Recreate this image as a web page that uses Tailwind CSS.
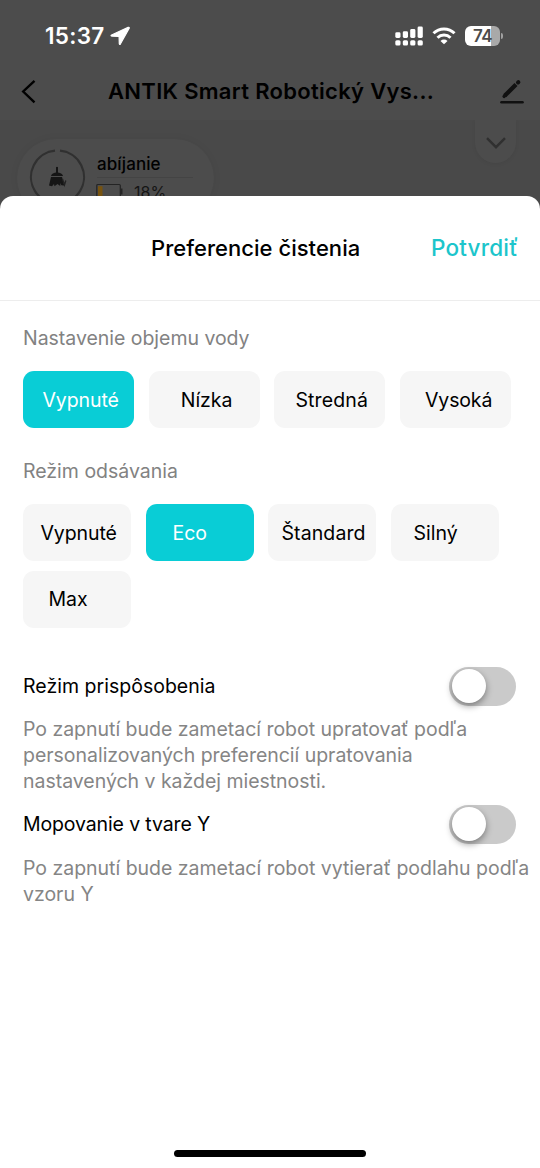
<!DOCTYPE html>
<html lang="sk">
<head>
<meta charset="utf-8">
<title>Preferencie čistenia</title>
<script src="https://cdn.jsdelivr.net/npm/@tailwindcss/browser@4"></script>
</head>
<body class="flex h-[1168px] w-[540px] flex-col overflow-hidden bg-[#494949] font-['Inter','Liberation_Sans',sans-serif] text-black">
  <header class="flex h-[120px] flex-none flex-col bg-[#4c4c4c]">
    <div class="flex h-[72px] items-center pl-[45px] pr-[37px] text-white">
      <span class="w-[65px] whitespace-nowrap text-[22.500px] font-semibold tracking-[0.3px]">15:37</span>
      <svg class="h-[20px] w-[20px]" viewBox="0 0 20 20"><path d="M18.2 1.300 1.600 9q-1.300.8.2 1.100l7.300.3.2 7.200q.3 1.500 1.200.2L19.200 2.300q.3-1.300-1-1Z" fill="#fff" stroke="#fff" stroke-width="1.200" stroke-linejoin="round"/></svg>
      <svg class="ml-auto h-[22px] w-[30px]" viewBox="0 0 30 22" fill="#fff"><rect x="1.300" y="7.300" width="5.200" height="5.700" rx="1.400"/><rect x="8.800" y="6.300" width="5.200" height="6.700" rx="1.400"/><rect x="16.200" y="4" width="5.200" height="9" rx="1.400"/><rect x="23.600" y="1.500" width="5.200" height="11.500" rx="1.400"/><rect x="1.300" y="15.200" width="5.200" height="5.200" rx="1.500"/><rect x="8.800" y="15.200" width="5.200" height="5.200" rx="1.500"/><rect x="16.200" y="15.200" width="5.200" height="5.200" rx="1.500"/><rect x="23.600" y="15.200" width="5.200" height="5.200" rx="1.500"/></svg>
      <svg class="ml-[8px] h-[20px] w-[24px]" viewBox="0 0 24 20" fill="none" stroke="#fff" stroke-width="3"><path d="M1.500 7.200a15 15 0 0 1 21 0"/><path d="M5.500 11.700a9.300 9.300 0 0 1 13 0"/><path d="M12 18.300 8.500 14.900a5 5 0 0 1 7 0Z" fill="#fff" stroke="none"/></svg>
      <div class="ml-[9px] flex items-center">
        <div class="flex h-[20px] w-[35px] items-center justify-center rounded-[6px] bg-linear-to-r from-white from-75% to-[#a9a9a9] to-75% pt-px text-[17px] font-semibold leading-[19px] tracking-[-0.5px] text-[#4c4c4c]">74</div>
        <div class="ml-px h-[6px] w-[2px] rounded-r-full bg-[#a0a0a0]"></div>
      </div>
    </div>
    <div class="flex h-[40px] items-center">
      <svg class="ml-[20px] h-[26px] w-[18px]" viewBox="0 0 18 26" fill="none" stroke="#000" stroke-width="2.400"><path d="M14.500 1.800 3.200 12.500l11.300 10.900"/></svg>
      <h1 class="ml-[70px] w-[340px] whitespace-nowrap pb-[2px] text-[22px] font-semibold leading-[32px] tracking-[0.3px]">ANTIK Smart Robotický Vys...</h1>
      <svg class="ml-[51px] h-[26px] w-[26px]" viewBox="0 0 26 26" fill="none" stroke="#111" stroke-linecap="round"><path d="M2.500 23.200h21" stroke-width="2.600"/><path d="M5.700 16.800 17 5.500" stroke-width="4.200" stroke-linecap="butt"/><path d="m5.900 16.600-.8.800" stroke-width="3.400"/><path d="m19 3.500.4-.4" stroke-width="4"/></svg>
    </div>
  </header>

  <div class="flex h-[76px] flex-none items-start overflow-hidden">
    <div class="ml-[17px] mt-[19px] flex h-[78px] w-[197px] flex-none items-start rounded-full bg-[#4c4c4c] shadow-[0_0_8px_rgba(0,0,0,0.05)]">
      <svg class="ml-[12px] mt-[9px] h-[58px] w-[58px] flex-none" viewBox="0 0 58 58" fill="none"><path d="M31 2.700a26.500 26.500 0 1 1-5 0" stroke="#303030" stroke-width="2.200"/><path d="M27 19.300q1-1.300 2 0v5.200q4.500.5 5 3.500H22q.5-3 5-3.500Z" fill="#151515"/><path d="M22 29h11l2.300 8.500-3-.3-.8-2.200-.3 3-2.700-2-3 2.300-.5-2.300-2 2.300-3-.8Z" fill="#151515"/><path d="m33.500 31 2 6 1.300-4.500" stroke="#222" stroke-width="1.300"/></svg>
      <div class="ml-[10px] flex w-[96px] flex-col">
        <div class="mt-[13px] h-[26px] border-b border-[#444] text-[17px] font-medium leading-[24px] tracking-[0.1px]">abíjanie</div>
        <div class="mt-[4px] flex h-[24px] items-start">
          <svg class="-ml-px mt-px h-[18px] w-[28px]" viewBox="0 0 28 18"><rect x=".8" y="1.500" width="23.500" height="14" rx="1" fill="none" stroke="#242424" stroke-width="1.200"/><path d="M24.500 5.500h2v6h-2" fill="#242424"/><rect x="2" y="3.200" width="4.500" height="11" fill="#77530f"/></svg>
          <span class="ml-[10px] text-[16px] leading-[20px] text-[#151515]">18%</span>
        </div>
      </div>
    </div>
    <div class="ml-auto mr-[24px] flex h-[43px] w-[41px] items-center justify-center rounded-b-full bg-[#4c4c4c] pt-[3px] shadow-[0_1px_4px_rgba(0,0,0,0.06)]">
      <svg class="h-[12px] w-[20px]" viewBox="0 0 20 12" fill="none" stroke="#303030" stroke-width="2.400"><path d="m1 1.200 9 9 9-9"/></svg>
    </div>
  </div>

  <main class="flex flex-1 flex-col rounded-t-[13px] bg-white">
    <div class="flex h-[105px] flex-none items-center border-b border-[#ededed] pl-[151px]">
      <h2 class="w-[280px] whitespace-nowrap text-[22px] font-medium tracking-[0.03px]">Preferencie čistenia</h2>
      <button class="whitespace-nowrap text-left text-[22.500px] font-medium tracking-[0.200px] text-[#1cc5cb]">Potvrdiť</button>
    </div>

    <section class="px-[23px] pt-[22px]">
      <h3 class="h-[30px] text-[19.500px] leading-[30px] tracking-[-0.03px] text-[#828282]">Nastavenie objemu vody</h3>
      <div class="mt-[18px] flex gap-[14.700px] text-[19.500px]">
        <button class="h-[57px] w-[111px] rounded-[11px] bg-[#09cdd6] pl-[19.500px] pt-[2px] text-left tracking-[-0.100px] text-white">Vypnuté</button>
        <button class="h-[57px] w-[111px] rounded-[11px] bg-[#f6f6f6] pl-[32px] pt-[2px] text-left">Nízka</button>
        <button class="h-[57px] w-[111px] rounded-[11px] bg-[#f6f6f6] pl-[21px] pt-[2px] text-left tracking-[0.150px]">Stredná</button>
        <button class="h-[57px] w-[111px] rounded-[11px] bg-[#f6f6f6] pl-[25px] pt-[2px] text-left tracking-[-0.150px]">Vysoká</button>
      </div>
    </section>

    <section class="px-[23px] pt-[28px]">
      <h3 class="h-[30px] text-[19.500px] leading-[30px] text-[#828282]">Režim odsávania</h3>
      <div class="mt-[18px] flex flex-wrap gap-x-[14.500px] gap-y-[9.500px] text-[19.500px]">
        <button class="h-[57px] w-[108px] rounded-[11px] bg-[#f6f6f6] pl-[17.500px] pt-[2px] text-left tracking-[-0.100px]">Vypnuté</button>
        <button class="h-[57px] w-[108px] rounded-[11px] bg-[#09cdd6] pl-[27px] pt-[2px] text-left text-white">Eco</button>
        <button class="h-[57px] w-[108px] whitespace-nowrap rounded-[11px] bg-[#f6f6f6] pl-[13.500px] pt-[2px] text-left tracking-[0.100px]">Štandard</button>
        <button class="h-[57px] w-[108px] rounded-[11px] bg-[#f6f6f6] pl-[23px] pt-[2px] text-left">Silný</button>
        <button class="h-[57px] w-[108px] rounded-[11px] bg-[#f6f6f6] pl-[25.500px] pt-[2px] text-left">Max</button>
      </div>
    </section>

    <section class="mt-[39px] pl-[23px]">
      <div class="flex h-[39px] items-center justify-between pr-[24px]">
        <h3 class="pt-[2px] text-[19.500px] tracking-[0.020px]">Režim prispôsobenia</h3>
        <button role="switch" aria-checked="false" aria-label="Režim prispôsobenia" class="flex h-[39px] w-[67px] items-center rounded-full bg-[#cacaca] pl-[3px]"><span class="h-[34px] w-[34px] rounded-full bg-white shadow-[0_3px_7px_rgba(0,0,0,0.4)]"></span></button>
      </div>
      <p class="mt-[10px] whitespace-nowrap text-[19.500px] leading-[26px] tracking-[-0.025px] text-[#858585]">Po zapnutí bude zametací robot upratovať podľa<br>personalizovaných preferencií upratovania<br>nastavených v každej miestnosti.</p>
    </section>

    <section class="mt-[11px] pl-[23px]">
      <div class="flex h-[39px] items-center justify-between pr-[24px]">
        <h3 class="pt-[2px] text-[19.500px] tracking-[-0.130px]">Mopovanie v tvare Y</h3>
        <button role="switch" aria-checked="false" aria-label="Mopovanie v tvare Y" class="flex h-[39px] w-[67px] items-center rounded-full bg-[#cacaca] pl-[3px]"><span class="h-[34px] w-[34px] rounded-full bg-white shadow-[0_3px_7px_rgba(0,0,0,0.4)]"></span></button>
      </div>
      <p class="mt-[11px] whitespace-nowrap text-[19.500px] leading-[26px] tracking-[-0.015px] text-[#858585]">Po zapnutí bude zametací robot vytierať podlahu podľa<br>vzoru Y</p>
    </section>

    <div class="mx-auto mb-[11px] mt-auto h-[7px] w-[192px] rounded-full bg-black"></div>
  </main>
</body>
</html>
